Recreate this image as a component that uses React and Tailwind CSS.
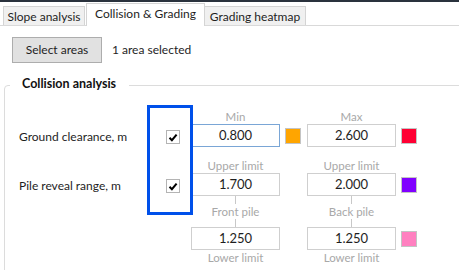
import React from "react";

function Check() {
  return (
    <div className="w-[14px] h-[14px] border border-[#b4b4b4] bg-white flex items-center justify-center">
      <svg width="10" height="9" viewBox="0 0 10 9">
        <path d="M1.5 4.8 L3.9 7.2 L8.6 1.6" fill="none" stroke="#000" strokeWidth="2" />
      </svg>
    </div>
  );
}

function Input({ value, focused }) {
  return (
    <div
      className={
        "w-[89px] h-[23px] bg-white border flex items-center justify-center text-[13px] text-[#1e1e1e] " +
        (focused ? "border-[#7aa6d6]" : "border-[#cfcfcf]")
      }
    >
      {value}
    </div>
  );
}

function Swatch({ color }) {
  return (
    <div className="w-[16px] h-[16px] border border-[#c4c4c4] p-0">
      <div className="w-full h-full" style={{ backgroundColor: color }} />
    </div>
  );
}

function Caption({ a, b }) {
  return (
    <div className="flex h-[15px] leading-[15px] text-[#a8a8a8] text-[11.5px]">
      <div className="w-[172px]" />
      <div className="w-[89px] text-center">{a}</div>
      <div className="w-[27px]" />
      <div className="w-[89px] text-center">{b}</div>
    </div>
  );
}

function Connector() {
  return (
    <div className="flex h-[8px]">
      <div className="w-[172px]" />
      <div className="w-[89px] flex justify-center">
        <div className="w-px h-full bg-[#c8c8c8]" />
      </div>
      <div className="w-[27px]" />
      <div className="w-[89px] flex justify-center">
        <div className="w-px h-full bg-[#c8c8c8]" />
      </div>
    </div>
  );
}

function Row({ label, checked, v1, v2, c1, c2, focused }) {
  return (
    <div className="flex items-center h-[23px]">
      <div className="w-[128px] text-[#1e1e1e] pt-[2px]">{label}</div>
      <div className="w-[44px] flex pl-[19px] pt-[3px]">{checked ? <Check /> : null}</div>
      <Input value={v1} focused={focused} />
      <div className="w-[5px]" />
      {c1 ? <Swatch color={c1} /> : <div className="w-[16px]" />}
      <div className="w-[6px]" />
      <Input value={v2} />
      <div className="w-[5px]" />
      <Swatch color={c2} />
    </div>
  );
}

export default function App() {
  return (
    <div className="w-[459px] h-[270px] overflow-hidden bg-white font-['Lato',sans-serif] text-[12px] text-[#1e1e1e] relative">
      <div className="h-[2px] bg-[#2a323d]" />
      <div className="flex items-end h-[24px] pl-[3px] border-b border-[#d9d9d9]">
        <div className="w-[82px] h-[19px] border border-b-0 border-[#d4d4d4] bg-[#f0f0f0] flex items-center justify-center leading-[17px]">
          Slope analysis
        </div>
        <div className="ml-[1px] w-[119px] h-[23px] -mb-px border border-b-0 border-[#d4d4d4] bg-white flex items-center justify-center leading-[17px] pb-[3px]">
          Collision &amp; Grading
        </div>
        <div className="w-[101px] h-[19px] border border-b-0 border-l-0 border-[#d4d4d4] bg-[#f0f0f0] flex items-center justify-center leading-[17px]">
          Grading heatmap
        </div>
      </div>

      <div className="flex items-center mt-[11px] ml-[12px]">
        <div className="w-[90px] h-[26px] bg-[#e1e1e1] border border-[#adadad] flex items-center justify-center">
          Select areas
        </div>
        <div className="ml-[10px]">1 area selected</div>
      </div>

      <fieldset className="mt-[13px] ml-[4px] w-[520px] h-[220px] border border-[#dcdcdc] rounded-[4px] p-0 m-0">
        <legend className="ml-[5px] px-[12px] pr-[13px] pb-[4px] leading-[15px] font-bold text-[12.5px] text-[#111]">
          Collision analysis
        </legend>
        <div className="pl-[14px] pt-[14px]">
          <Caption a="Min" b="Max" />
          <Row label="Ground clearance, m" checked v1="0.800" v2="2.600" c1="#ffa500" c2="#ff0033" focused />
          <div className="h-[11px]" />
          <Caption a="Upper limit" b="Upper limit" />
          <Row label="Pile reveal range, m" checked v1="1.700" v2="2.000" c2="#8000ff" />
          <Connector />
          <Caption a="Front pile" b="Back pile" />
          <Connector />
          <Row label="" v1="1.250" v2="1.250" c2="#ff80c0" />
          <Caption a="Lower limit" b="Lower limit" />
        </div>
      </fieldset>

      <div className="absolute left-[147px] top-[105px] w-[46px] h-[110px] border-[3px] border-[#0050ea]" />
    </div>
  );
}
